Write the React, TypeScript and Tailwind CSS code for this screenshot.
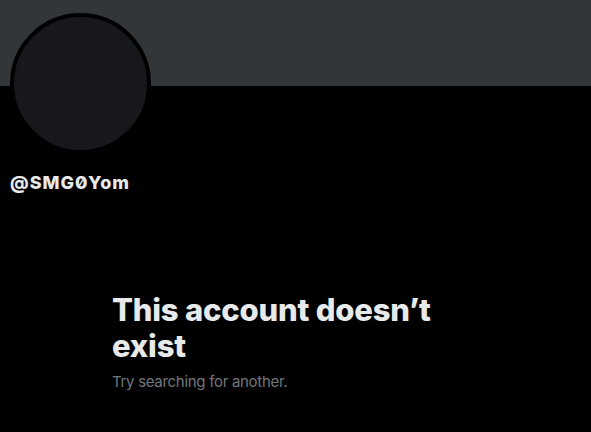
import React from 'react';

export default function App() {
  return (
    <div className="min-h-[432px] w-full bg-black text-[#e7e9ea]" style={{ fontFamily: 'Inter, "Noto Sans", sans-serif' }}>
      {/* Banner */}
      <div className="h-[86px] w-full bg-[#333639]" />

      {/* Avatar */}
      <div className="ml-[10px] -mt-[73px] h-[141px] w-[141px] rounded-full border-4 border-black bg-[#16181c]" />

      {/* Handle */}
      <div className="ml-[10px] mt-[19px] text-[18px] font-extrabold leading-[20px] tracking-[1px] slashed-zero">@SMG0Yom</div>

      {/* Empty state */}
      <div className="ml-[112px] mt-[99px] w-[360px]">
        <h2 className="text-[31px] font-extrabold leading-[36px] tracking-[-0.2px]">This account doesn’t exist</h2>
        <p className="mt-2 text-[15px] leading-[20px] tracking-[-0.3px] text-[#71767b]">Try searching for another.</p>
      </div>
    </div>
  );
}
